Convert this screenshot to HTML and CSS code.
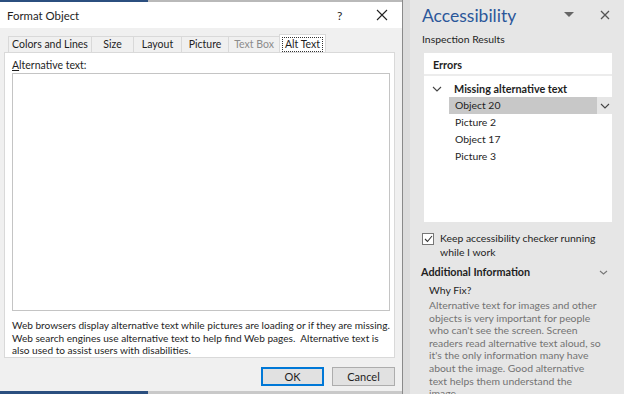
FILE: index.html
```html
<!DOCTYPE html>
<html lang="en">
<head>
  <meta charset="UTF-8">
  <title>Format Object - Accessibility</title>
  <link rel="stylesheet" href="styles.css">
</head>
<body>

<div class="dialog">
  <div class="strip"><span class="strip-blue"></span></div>
  <div class="titlebar">
    <span class="title">Format Object</span>
    <span class="help">?</span>
    <span class="close">
      <svg width="12" height="12" viewBox="0 0 12 12"><path d="M1 1L11 11M11 1L1 11" stroke="#222" stroke-width="1.1" fill="none"/></svg>
    </span>
  </div>

  <div class="dialog-body">
    <div class="tabs">
      <div class="tab">Colors and Lines</div>
      <div class="tab">Size</div>
      <div class="tab">Layout</div>
      <div class="tab">Picture</div>
      <div class="tab disabled">Text Box</div>
      <div class="tab active"><span class="focus">Alt Text</span></div>
    </div>
    <div class="tab-page">
      <label class="alt-label" for="altText"><u>A</u>lternative text:</label>
      <textarea id="altText" class="alt-box"></textarea>
      <p class="note">Web browsers display alternative text while pictures are loading or if they are missing.<br>
        Web search engines use alternative text to help find Web pages.&nbsp; Alternative text is<br>
        also used to assist users with disabilities.</p>
    </div>
    <div class="buttons">
      <button class="btn default">OK</button>
      <button class="btn">Cancel</button>
    </div>
  </div>
  <div class="strip bottom"><span class="strip-blue"></span></div>
</div>

<div class="gap"></div>

<div class="pane">
  <div class="pane-head">
    <h1>Accessibility</h1>
    <span class="pane-menu">
      <svg width="10" height="6" viewBox="0 0 10 6"><path d="M0 0H10L5 5Z" fill="#666"/></svg>
    </span>
    <span class="pane-close">
      <svg width="10" height="10" viewBox="0 0 10 10"><path d="M1 1L9 9M9 1L1 9" stroke="#555" stroke-width="1.3" fill="none"/></svg>
    </span>
  </div>
  <div class="section-label">Inspection Results</div>

  <div class="results">
    <div class="results-head">Errors</div>
    <div class="group">
      <svg class="chev" width="10" height="6" viewBox="0 0 10 6"><path d="M1 1L5 5L9 1" stroke="#444" stroke-width="1.1" fill="none"/></svg>
      <span>Missing alternative text</span>
    </div>
    <ul class="items">
      <li class="selected">Object 20
        <span class="item-drop">
          <svg width="10" height="6" viewBox="0 0 10 6"><path d="M1 1L5 5L9 1" stroke="#444" stroke-width="1.1" fill="none"/></svg>
        </span>
      </li>
      <li>Picture 2</li>
      <li>Object 17</li>
      <li>Picture 3</li>
    </ul>
  </div>

  <div class="keep">
    <span class="check">
      <svg width="9" height="8" viewBox="0 0 9 8"><path d="M1 4L3.5 6.5L8 1" stroke="#333" stroke-width="1.1" fill="none"/></svg>
    </span>
    <span>Keep accessibility checker running while I work</span>
  </div>

  <div class="info-head">
    <span>Additional Information</span>
    <svg width="9" height="5" viewBox="0 0 9 5"><path d="M1 1L4.5 4L8 1" stroke="#777" stroke-width="1.1" fill="none"/></svg>
  </div>
  <div class="why">Why Fix?</div>
  <p class="why-text">Alternative text for images and other objects is very important for people who can't see the screen. Screen readers read alternative text aloud, so it's the only information many have about the image. Good alternative text helps them understand the image.</p>
</div>

</body>
</html>
```

FILE: styles.css
```css
body {
  margin: 0;
  width: 624px;
  height: 394px;
  overflow: hidden;
  display: flex;
  font-family: Lato, "Open Sans", sans-serif;
  color: #1e1e1e;
  background-color: #e6e6e6;
}

/* dialog */

.dialog {
  width: 402px;
  height: 394px;
  display: flex;
  flex-direction: column;
  background-color: #fff;
  border-right: 1px solid #8a8a8a;
  box-shadow: 2px 0 4px rgba(0, 0, 0, 0.15);
}

.strip {
  height: 2px;
  background-color: #b9b9b9;
  display: flex;
}

.strip-blue {
  width: 148px;
  background-color: #2b4f7f;
}

.strip.bottom {
  height: 3px;
  background-color: #c9c9c9;
}

.titlebar {
  height: 26px;
  display: flex;
  align-items: center;
  padding-left: 7px;
  font-size: 11.4px;
}

.title {
  flex: 1;
}

.help {
  width: 14px;
  margin-right: 25px;
  font-size: 12px;
}

.close {
  width: 12px;
  margin-right: 14px;
  display: flex;
}

.dialog-body {
  flex: 1;
  background-color: #f0f0f0;
  display: flex;
  flex-direction: column;
  padding: 6px 7px 0 4px;
}

.tabs {
  display: flex;
  align-items: flex-end;
  padding-left: 4px;
  height: 18px;
}

.tab {
  font-size: 10.5px;
  height: 16px;
  line-height: 15px;
  border: 1px solid #d9d9d9;
  border-bottom: none;
  border-right: none;
  box-sizing: border-box;
  background-color: #f0f0f0;
  white-space: nowrap;
  text-align: center;
}

.tab:nth-child(1) { width: 83px; }
.tab:nth-child(2) { width: 42px; }
.tab:nth-child(3) { width: 48px; }
.tab:nth-child(4) { width: 47px; }
.tab:nth-child(5) { width: 51px; }

.tab.disabled {
  color: #8c8c8c;
}

.tab.active {
  height: 19px;
  width: 47px;
  background-color: #fff;
  border-right: 1px solid #d9d9d9;
  padding: 2px 2px 0;
  margin-bottom: -1px;
}

.focus {
  display: block;
  border: 1px dotted #333;
  line-height: 13px;
}

.tab-page {
  box-sizing: border-box;
  height: 306px;
  background-color: #fff;
  border: 1px solid #d9d9d9;
  display: flex;
  flex-direction: column;
  padding: 6px 7px 0 7px;
}

.alt-label {
  font-size: 10.5px;
  line-height: 13px;
}

.alt-box {
  margin: 1px 0 0;
  height: 236px;
  width: 376px;
  border: 1px solid #c4c4c4;
  resize: none;
  padding: 0;
}

.note {
  margin: 8px 0 0;
  font-size: 10.1px;
  line-height: 12.6px;
  white-space: nowrap;
}

.buttons {
  display: flex;
  justify-content: flex-end;
  gap: 8px;
  padding-top: 9px;
}

.btn {
  width: 63px;
  height: 19px;
  font-family: inherit;
  font-size: 11px;
  background-color: #e1e1e1;
  border: 1px solid #adadad;
  padding: 0;
  color: #1e1e1e;
}

.btn.default {
  border: 2px solid #0078d7;
}

.gap {
  width: 7px;
  background-color: #dcdcdc;
}

/* accessibility pane */

.pane {
  flex: 1;
  padding: 0 12px;
  font-size: 10.4px;
  overflow: hidden;
}

.pane-head {
  display: flex;
  align-items: center;
  height: 30px;
}

.pane-head h1 {
  flex: 1;
  margin: 0;
  font-weight: normal;
  font-size: 17.5px;
  color: #2b579a;
}

.pane-menu {
  display: flex;
  margin-right: 26px;
}

.pane-close {
  display: flex;
  margin-right: 2px;
}

.section-label {
  margin-top: 1px;
  line-height: 16px;
}

.results {
  margin: 6px 0 0 2px;
  height: 169px;
  background-color: #fff;
}

.results-head {
  font-weight: bold;
  font-size: 10.8px;
  padding: 5px 0 0 9px;
  height: 16px;
  border-bottom: 2px solid #ececec;
}

.group {
  display: flex;
  align-items: center;
  font-weight: bold;
  font-size: 10.8px;
  padding: 4px 0 0 8px;
  height: 17px;
}

.chev {
  margin-right: 12px;
}

.items {
  list-style: none;
  margin: 0;
  padding: 0 0 0 25px;
}

.items li {
  height: 17px;
  line-height: 17px;
  padding-left: 6px;
  display: flex;
}

.items li.selected {
  background-color: #c8c8c8;
  justify-content: space-between;
}

.item-drop {
  width: 15px;
  background-color: #e6e6e6;
  display: flex;
  align-items: center;
  justify-content: center;
}

.keep {
  display: flex;
  align-items: flex-start;
  gap: 6px;
  margin-top: 9px;
  line-height: 14px;
  padding-right: 10px;
}

.check {
  width: 10px;
  height: 10px;
  border: 1px solid #777;
  background-color: #fff;
  display: flex;
  align-items: center;
  justify-content: center;
  margin-top: 2px;
  flex-shrink: 0;
}

.info-head {
  display: flex;
  justify-content: space-between;
  align-items: center;
  font-weight: bold;
  font-size: 10.8px;
  margin: 5px 0 0 -1px;
  padding-right: 4px;
  line-height: 16px;
}

.why {
  margin: 2px 0 0 7px;
  line-height: 16px;
}

.why-text {
  margin: 1px 8px 0 7px;
  color: #737373;
  line-height: 12.6px;
}
```
